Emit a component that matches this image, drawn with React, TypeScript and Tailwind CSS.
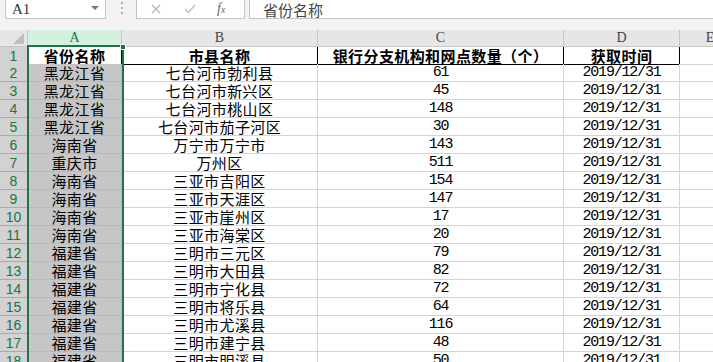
import { FC } from "react";

type Row = { n: number; prov: string; city: string; count: string; date: string };

const rows: Row[] = [
  { n: 2, prov: "黑龙江省", city: "七台河市勃利县", count: "61", date: "2019/12/31" },
  { n: 3, prov: "黑龙江省", city: "七台河市新兴区", count: "45", date: "2019/12/31" },
  { n: 4, prov: "黑龙江省", city: "七台河市桃山区", count: "148", date: "2019/12/31" },
  { n: 5, prov: "黑龙江省", city: "七台河市茄子河区", count: "30", date: "2019/12/31" },
  { n: 6, prov: "海南省", city: "万宁市万宁市", count: "143", date: "2019/12/31" },
  { n: 7, prov: "重庆市", city: "万州区", count: "511", date: "2019/12/31" },
  { n: 8, prov: "海南省", city: "三亚市吉阳区", count: "154", date: "2019/12/31" },
  { n: 9, prov: "海南省", city: "三亚市天涯区", count: "147", date: "2019/12/31" },
  { n: 10, prov: "海南省", city: "三亚市崖州区", count: "17", date: "2019/12/31" },
  { n: 11, prov: "海南省", city: "三亚市海棠区", count: "20", date: "2019/12/31" },
  { n: 12, prov: "福建省", city: "三明市三元区", count: "79", date: "2019/12/31" },
  { n: 13, prov: "福建省", city: "三明市大田县", count: "82", date: "2019/12/31" },
  { n: 14, prov: "福建省", city: "三明市宁化县", count: "72", date: "2019/12/31" },
  { n: 15, prov: "福建省", city: "三明市将乐县", count: "64", date: "2019/12/31" },
  { n: 16, prov: "福建省", city: "三明市尤溪县", count: "116", date: "2019/12/31" },
  { n: 17, prov: "福建省", city: "三明市建宁县", count: "48", date: "2019/12/31" },
  { n: 18, prov: "福建省", city: "三明市明溪县", count: "50", date: "2019/12/31" },
];

const cols = "grid grid-cols-[28px_94px_196px_246px_116px_60px]";
const cjk =
  "flex items-center justify-center whitespace-nowrap pt-[1px] font-['Noto_Sans_CJK_SC',sans-serif] text-[15px] leading-[16px] tracking-[0.4px] text-black";
const mono =
  "flex items-center justify-center whitespace-nowrap pt-[1px] font-['Liberation_Mono',monospace] text-[15px] leading-[16px] tracking-[-1.2px] text-black";

const FormulaBar: FC = () => (
  <div className="flex h-[30px] items-start bg-[#f3f3f3]">
    <div className="ml-[5px] flex h-[19px] w-[101px] items-center justify-between border-x border-b border-[#c6c6c6] bg-white pl-[6px] pr-[6px]">
      <span className="font-['Liberation_Serif',serif] text-[15px] leading-[15px] text-[#333]">A1</span>
      <svg width="8" height="5" viewBox="0 0 8 5" className="-mt-[2px]">
        <polygon points="0,0 8,0 4,4" fill="#7a7a7a" />
      </svg>
    </div>
    <div className="ml-[15px] mt-[2px] flex flex-col gap-[3px]">
      <span className="h-[2px] w-[2px] bg-[#b0b0b0]" />
      <span className="h-[2px] w-[2px] bg-[#b0b0b0]" />
      <span className="h-[2px] w-[2px] bg-[#b0b0b0]" />
    </div>
    <div className="ml-[13px] flex h-[19px] w-[109px] items-center border-x border-b border-[#c6c6c6] bg-white">
      <svg width="10" height="10" viewBox="0 0 10 10" className="ml-[14px]">
        <path d="M1 1 L9 9 M9 1 L1 9" stroke="#b8b8b8" strokeWidth="1.3" />
      </svg>
      <svg width="12" height="10" viewBox="0 0 12 10" className="ml-[23px]">
        <path d="M1 5 L4.5 8.5 L11 1" stroke="#c2c2c2" strokeWidth="1.5" fill="none" />
      </svg>
      <span className="ml-[21px] font-['Liberation_Serif',serif] text-[14px] italic leading-[14px] text-[#6b6b6b]">
        f<span className="text-[10px]">x</span>
      </span>
    </div>
    <div className="ml-[4px] flex h-[19px] flex-1 items-center border-b border-l border-[#c6c6c6] bg-white pl-[13px]">
      <span className="font-['Noto_Sans_CJK_SC',sans-serif] text-[15px] leading-[15px] text-[#444]">省份名称</span>
    </div>
  </div>
);

const ColumnHeader: FC = () => (
  <div className={`${cols} h-[16px] bg-[#e6e6e6] font-['Liberation_Serif',serif] text-[14px] leading-[15px] text-[#444]`}>
    <div className="flex items-end justify-end border-b border-r border-[#c6c6c6] pb-[2px] pr-[3px]">
      <svg width="11" height="11" viewBox="0 0 11 11">
        <polygon points="11,0 11,11 0,11" fill="#bdbdbd" />
      </svg>
    </div>
    <div className="border-b-2 border-r border-b-[#217346] border-r-[#c6c6c6] bg-[#d3f0e0] text-center text-[#217346]">A</div>
    <div className="border-b border-r border-[#c6c6c6] text-center">B</div>
    <div className="border-b border-r border-[#c6c6c6] text-center">C</div>
    <div className="border-b border-r border-[#c6c6c6] text-center">D</div>
    <div className="border-b border-[#c6c6c6] text-center">E</div>
  </div>
);

const RowNum: FC<{ n: number }> = ({ n }) => (
  <div className="flex items-center justify-center border-b border-r border-[#ababab] bg-[#d2d2d2] pt-[1px] font-['Liberation_Sans',sans-serif] text-[14px] leading-[16px] text-[#217346]">
    {n}
  </div>
);

const App: FC = () => {
  return (
    <div className="relative h-[362px] w-[713px] overflow-hidden bg-white">
      <FormulaBar />
      <ColumnHeader />

      <div className={`${cols} h-[18px] border-t border-black`}>
        <RowNum n={1} />
        <div className={`${cjk} border-b border-r border-black font-bold`}>省份名称</div>
        <div className={`${cjk} border-b border-r border-black font-bold`}>市县名称</div>
        <div className={`${cjk} border-b border-r border-black font-bold`}>银行分支机构和网点数量（个）</div>
        <div className={`${cjk} border-b border-r border-black font-bold`}>获取时间</div>
        <div className="border-b border-[#d4d4d4]" />
      </div>

      {rows.map((r) => (
        <div key={r.n} className={`${cols} h-[18px]`}>
          <RowNum n={r.n} />
          <div className={`${cjk} border-b border-r border-[#b9b9b9] bg-[#c6c6c6]`}>{r.prov}</div>
          <div className={`${cjk} border-b border-r border-[#d4d4d4]`}>{r.city}</div>
          <div className={`${mono} border-b border-r border-[#d4d4d4]`}>{r.count}</div>
          <div className={`${mono} border-b border-r border-[#d4d4d4]`}>{r.date}</div>
          <div className="border-b border-[#d4d4d4]" />
        </div>
      ))}

      {/* selection outline over column A */}
      <div className="pointer-events-none absolute left-[27px] top-[45px] h-[340px] w-[97px] border-2 border-[#217346]" />
      <div className="pointer-events-none absolute left-[120px] top-[44px] h-[6px] w-[6px] border border-white bg-[#217346]" />
    </div>
  );
};

export default App;
